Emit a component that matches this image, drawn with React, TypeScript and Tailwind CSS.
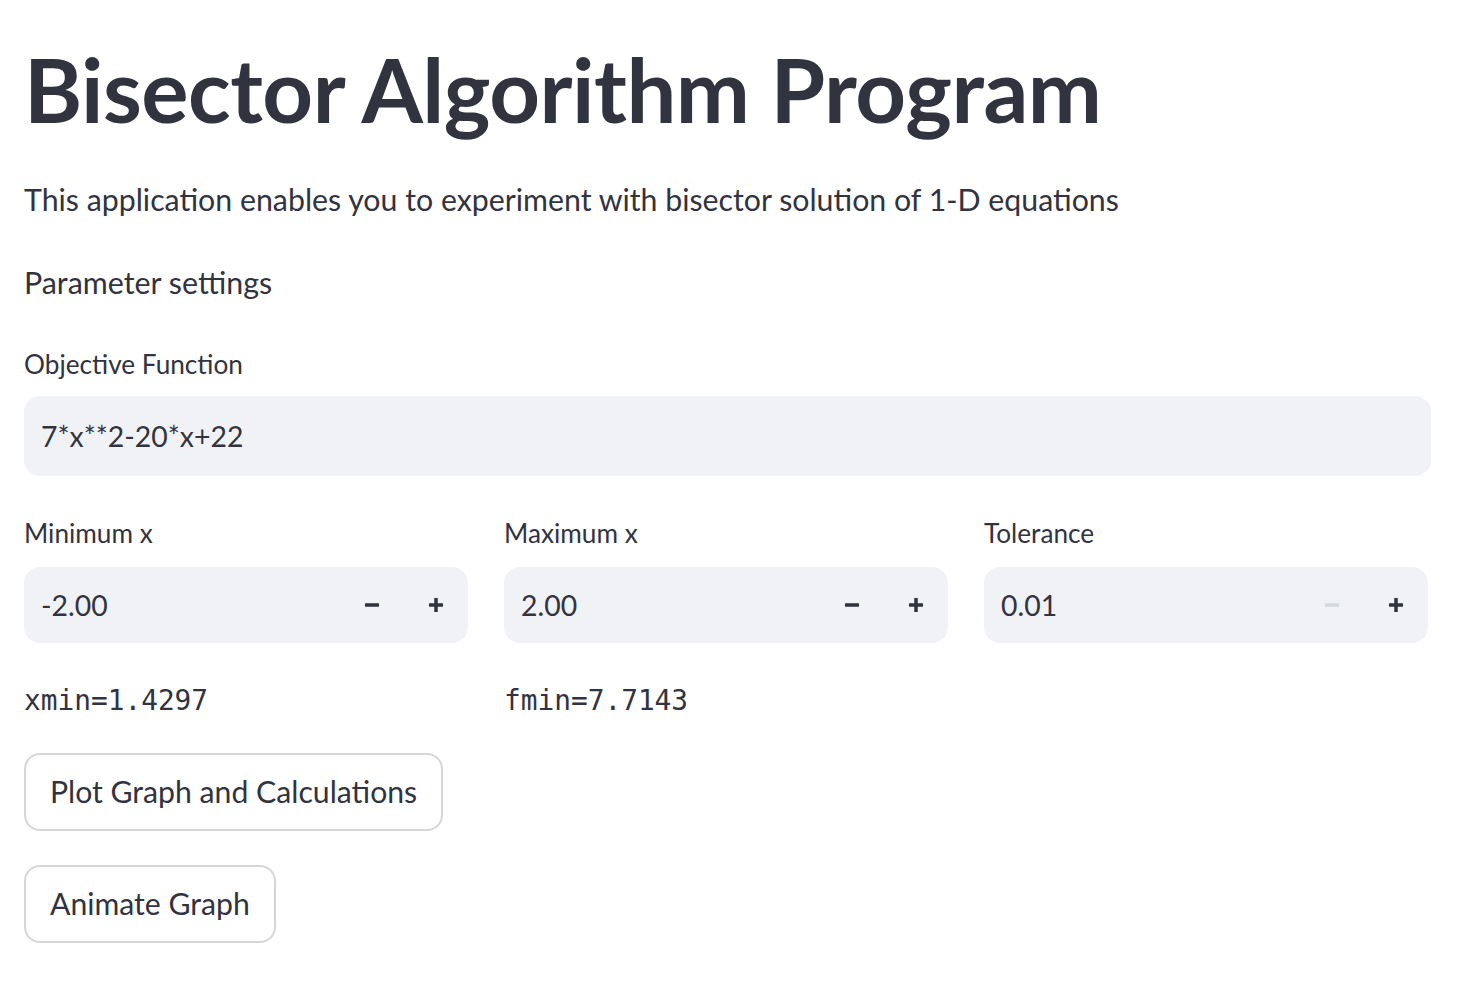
import React, { useState } from "react";

const FONT = { fontFamily: "Lato, 'Noto Sans', sans-serif" };
const MONO = { fontFamily: "'DejaVu Sans Mono', 'Liberation Mono', monospace" };

function Minus({ disabled }: { disabled?: boolean }) {
  return (
    <svg width="14" height="14" viewBox="0 0 14 14">
      <rect x="0" y="5.25" width="14" height="3.5" fill={disabled ? "#d5d8e0" : "#31333f"} />
    </svg>
  );
}

function Plus() {
  return (
    <svg width="14" height="14" viewBox="0 0 14 14">
      <rect x="0" y="5.25" width="14" height="3.5" fill="#31333f" />
      <rect x="5.25" y="0" width="3.5" height="14" fill="#31333f" />
    </svg>
  );
}

function NumberField({ label, value, minDisabled }: { label: string; value: string; minDisabled?: boolean }) {
  return (
    <div className="flex flex-col">
      <div className="h-[32px] flex items-center text-[26.2px]">{label}</div>
      <div className="mt-[17px] h-[76px] rounded-[16px] bg-[#f0f2f6] flex items-center">
        <span className="flex-1 pl-[17px] text-[28.4px]">{value}</span>
        <button className="w-16 h-full flex items-center justify-center">
          <Minus disabled={minDisabled} />
        </button>
        <button className="w-16 h-full flex items-center justify-center">
          <Plus />
        </button>
      </div>
    </div>
  );
}

export default function App() {
  const [fn, setFn] = useState("7*x**2-20*x+22");

  return (
    <div className="min-h-screen bg-white px-6 text-[#31333f]" style={FONT}>
      <h1 className="h-[184px] pb-[6px] flex items-center text-[88.5px] font-bold tracking-[-0.5px]">
        Bisector Algorithm Program
      </h1>
      <p className="h-[32px] flex items-center text-[30.3px]">
        This application enables you to experiment with bisector solution of 1-D equations
      </p>
      <p className="mt-[51px] h-[32px] flex items-center text-[30.4px]">Parameter settings</p>

      <div className="mt-[50px] h-[32px] flex items-center text-[26.2px]">Objective Function</div>
      <input
        value={fn}
        onChange={(e) => setFn(e.target.value)}
        className="mt-[15px] block w-[1407px] h-[80px] rounded-[16px] bg-[#f0f2f6] px-[17px] text-[28.4px] outline-none"
        style={FONT}
      />

      <div className="mt-[42px] grid grid-cols-[444px_444px_444px] gap-x-[36px]">
        <NumberField label="Minimum x" value="-2.00" />
        <NumberField label="Maximum x" value="2.00" />
        <NumberField label="Tolerance" value="0.01" minDisabled />
      </div>

      <div className="mt-[42px] grid grid-cols-[444px_444px_444px] gap-x-[36px] text-[27.8px]" style={MONO}>
        <div className="h-[32px] flex items-center">xmin=1.4297</div>
        <div className="h-[32px] flex items-center">fmin=7.7143</div>
      </div>

      <button className="mt-[36px] block h-[78px] px-[24px] rounded-[16px] border-2 border-[#d6d6d9] bg-white text-[30.2px]">
        Plot Graph and Calculations
      </button>
      <button className="mt-[34px] block h-[78px] px-[24px] rounded-[16px] border-2 border-[#d6d6d9] bg-white text-[30.2px]">
        Animate Graph
      </button>
    </div>
  );
}
